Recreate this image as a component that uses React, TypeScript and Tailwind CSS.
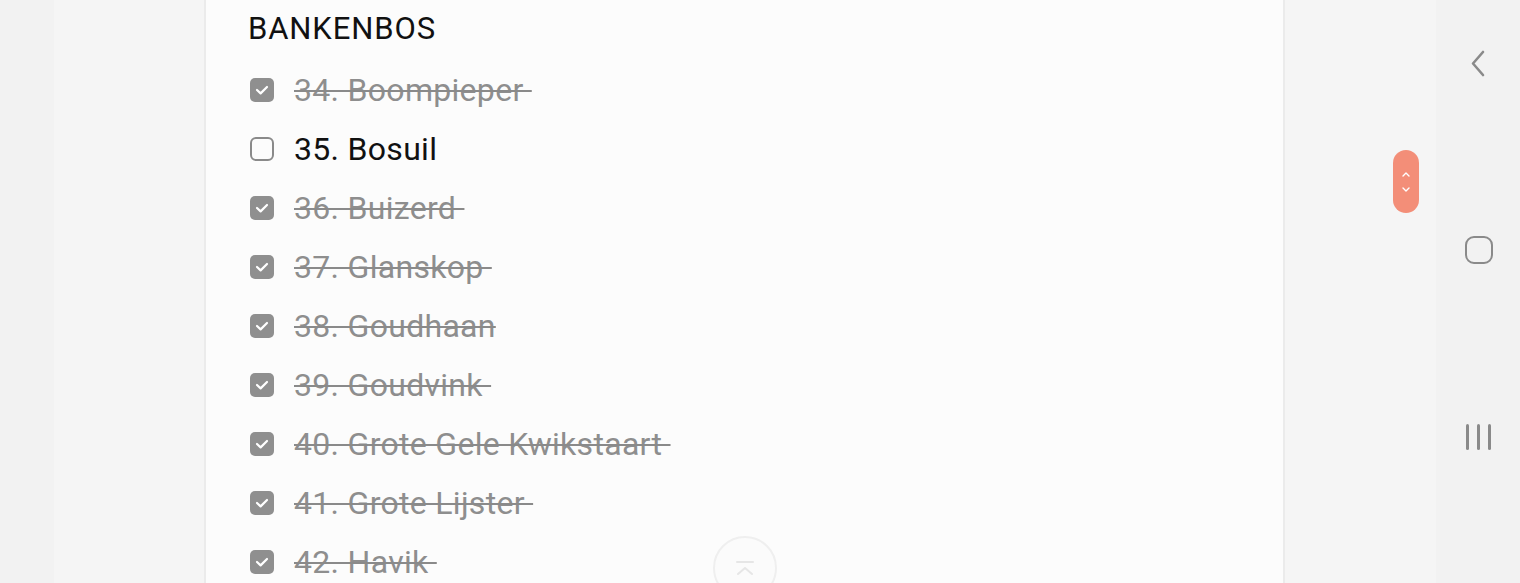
import React from "react";

const items = [
  { t: "34. Boompieper ", done: true },
  { t: "35. Bosuil", done: false },
  { t: "36. Buizerd ", done: true },
  { t: "37. Glanskop ", done: true },
  { t: "38. Goudhaan", done: true },
  { t: "39. Goudvink ", done: true },
  { t: "40. Grote Gele Kwikstaart ", done: true },
  { t: "41. Grote Lijster ", done: true },
  { t: "42. Havik ", done: true },
];

function Box({ done }: { done: boolean }) {
  if (done) {
    return (
      <div className="w-[24px] h-[24px] rounded-[5px] bg-[#8f8f8f] flex items-center justify-center shrink-0">
        <svg width="24" height="24" viewBox="0 0 24 24">
          <path d="M7 12 L10.6 15.4 L17 9" fill="none" stroke="#fff" strokeWidth="2.2" strokeLinecap="round" strokeLinejoin="round" />
        </svg>
      </div>
    );
  }
  return <div className="w-[24px] h-[24px] rounded-[6px] border-2 border-[#8a8a8a] shrink-0" />;
}

export default function App() {
  return (
    <div className="relative w-[1520px] h-[583px] overflow-hidden flex bg-[#f2f2f2]" style={{ fontFamily: "Roboto, 'Noto Sans', sans-serif" }}>
      <div className="w-[54px] bg-[#f2f2f2]" />
      <div className="w-[150px] bg-[#f5f5f5]" />
      <div className="w-[1081px] bg-[#fcfcfc] border-x-2 border-[#ebebeb] pl-[42px]">
        <div className="mt-[12px] text-[31px] leading-[34px] text-[#111] tracking-[0.9px]">BANKENBOS</div>
        <div className="mt-[14px] flex flex-col">
          {items.map((it, i) => (
            <div key={i} className="h-[59px] flex items-center pl-[2px] gap-[20px]">
              <Box done={it.done} />
              <span
                className={
                  "text-[32px] leading-[36px] tracking-[0.3px] whitespace-pre " +
                  (it.done ? "text-[#8e8e8e] line-through decoration-[#8a8a8a] decoration-[2px]" : "text-[#111]")
                }
              >
                {it.t}
              </span>
            </div>
          ))}
        </div>
      </div>
      <div className="w-[151px] bg-[#f5f5f5]" />
      <div className="flex-1 bg-[#f2f2f2] flex flex-col items-center">
        <div className="mt-[49px]">
          <svg width="20" height="30" viewBox="0 0 20 30">
            <path d="M15 3 L5 14.5 L15 26" fill="none" stroke="#8a8a8a" strokeWidth="2.6" strokeLinecap="round" strokeLinejoin="round" />
          </svg>
        </div>
        <div className="mt-[157px] ml-[1px] w-[28px] h-[28px] rounded-[9px] border-[2.6px] border-[#8a8a8a]" />
        <div className="mt-[160px] ml-[1px] flex gap-[8px]">
          <div className="w-[3px] h-[26px] rounded-full bg-[#8a8a8a]" />
          <div className="w-[3px] h-[26px] rounded-full bg-[#8a8a8a]" />
          <div className="w-[3px] h-[26px] rounded-full bg-[#8a8a8a]" />
        </div>
      </div>

      <div className="absolute left-[1393px] top-[150px] w-[26px] h-[63px] rounded-full bg-[#f38e78] flex flex-col items-center justify-center gap-[10px]">
        <svg width="10" height="6" viewBox="0 0 10 6">
          <path d="M2 5 L5 2 L8 5" fill="none" stroke="#fff" strokeWidth="1.4" strokeLinecap="round" strokeLinejoin="round" />
        </svg>
        <svg width="10" height="6" viewBox="0 0 10 6">
          <path d="M2 1 L5 4 L8 1" fill="none" stroke="#fff" strokeWidth="1.4" strokeLinecap="round" strokeLinejoin="round" />
        </svg>
      </div>

      <div className="absolute left-[713px] top-[536px] w-[64px] h-[64px] rounded-full border-2 border-[#efefef] bg-[#fbfbfb] flex justify-center">
        <svg width="24" height="24" viewBox="0 0 24 24" className="mt-[20px]">
          <path d="M4 4 L20 4" stroke="#e6e6e6" strokeWidth="2" strokeLinecap="round" />
          <path d="M5 16 L12 10 L19 16" fill="none" stroke="#e6e6e6" strokeWidth="2" strokeLinecap="round" strokeLinejoin="round" />
        </svg>
      </div>
    </div>
  );
}
